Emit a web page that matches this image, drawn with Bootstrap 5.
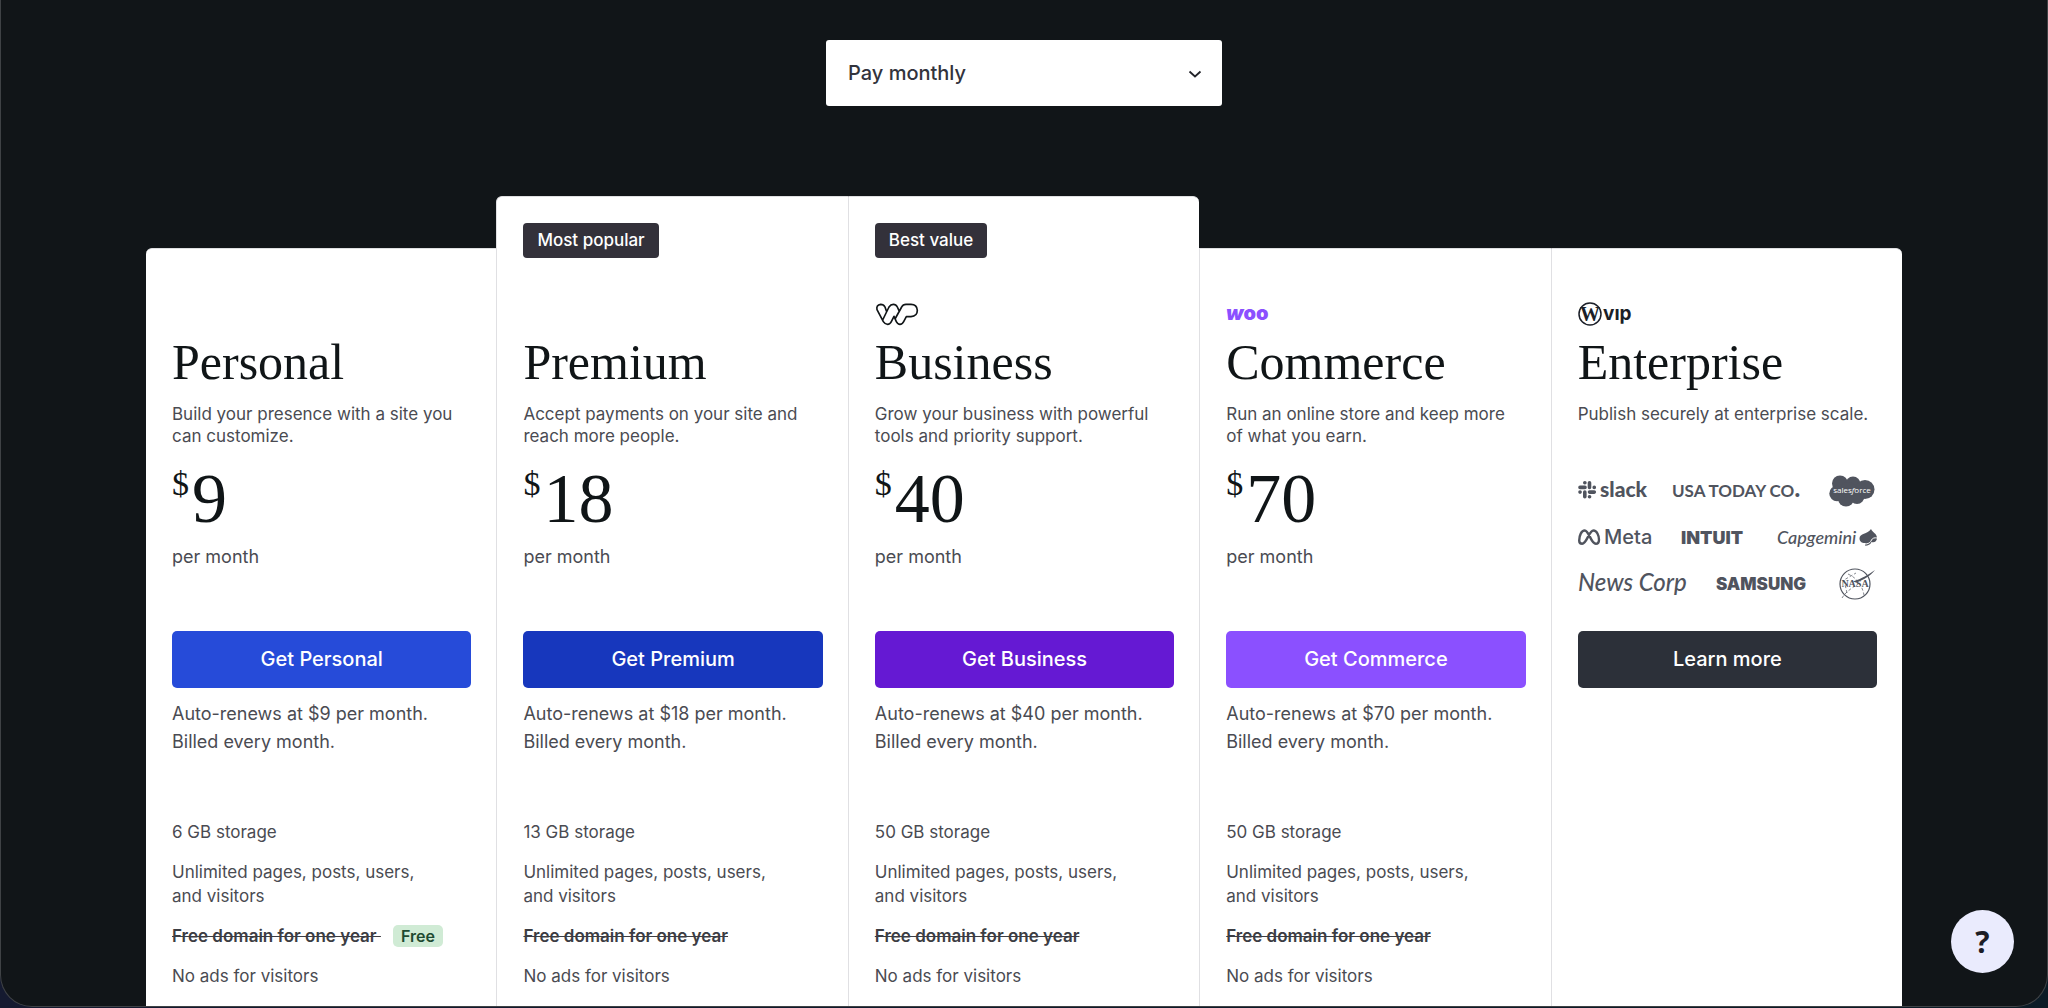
<!DOCTYPE html>
<html lang="en">
<head>
<meta charset="utf-8">
<meta name="viewport" content="width=device-width, initial-scale=1">
<title>Plans</title>
<link href="https://cdn.jsdelivr.net/npm/bootstrap@5.3.0/dist/css/bootstrap.min.css" rel="stylesheet">
<style>
  html, body { height: 100%; }
  body { background: linear-gradient(90deg, #151a30, #0b1b26); font-family: Inter, "Liberation Sans", sans-serif; color: #4a4b52; }
  .frame { height: calc(100vh - 1px); padding-top: 40px; background: #111518; border: 1px solid #3f4245; border-top: 0; border-radius: 0 0 32px 32px; overflow: hidden; }
  .term { width: 396px; height: 66px; padding: 0 60px 0 22px; border: 0; border-radius: 3px; background-color: #fff; color: #32333c; font-size: 20px; font-weight: 500; appearance: none; }
  .term-box svg { right: 20px; top: 28px; pointer-events: none; }
  .plans { width: 86%; max-width: 1756px; margin-top: 90px; }
  .plan { flex: 1 1 0; min-width: 0; background: #fff; margin-top: 52px; padding: 53px 25px 120px 26px; border-top: 1px solid #dfdfe1; border-left: 1px solid #e0e0e3; }
  .plan.featured { margin-top: 0; padding-top: 26px; }
  .plan.first { border-left: 0; }
  .plan.first, .plan.lead-in { border-top-left-radius: 6px; }
  .plan.last, .plan.lead-out { border-top-right-radius: 6px; }
  .tag { display: block; width: max-content; height: 35px; line-height: 35px; padding: 0 14px; border-radius: 4px; background: #33313a; color: #fff; font-size: 17px; font-weight: 500; margin-bottom: 44px; }
  .brand { height: 24px; display: flex; align-items: center; }
  .brand svg, .logos svg { display: block; overflow: visible; }
  .plan h2 { font: 400 50px/60px "Liberation Serif", serif; color: #101517; margin: 6px 0 11px; }
  .blurb { font-size: 17px; line-height: 22px; height: 60px; margin: 0; }
  .price { height: 68px; font-family: "Liberation Serif", serif; color: #101517; display: flex; align-items: flex-start; }
  .price sup { font-size: 34px; line-height: 42px; top: 0; margin-right: 3px; }
  .price b { font-weight: 400; font-size: 70px; line-height: 72px; }
  .period { font-size: 18px; line-height: 26px; margin: 13px 0 0; height: 87px; }
  .buy { display: flex; align-items: center; justify-content: center; width: 100%; height: 57px; border: 0; border-radius: 5px; color: #fff; font-size: 20px; font-weight: 500; padding-bottom: 8px; }
  .buy:hover { color: #fff; }
  .c-personal { background: #264bd9; } .c-premium { background: #1737bd; } .c-business { background: #6519d3; }
  .c-commerce { background: #8b50ff; } .c-enterprise { background: #2c3039; }
  .renew { font-size: 18px; line-height: 28px; margin: 12px 0 64px; }
  .perks { font-size: 17px; line-height: 24px; max-width: 275px; }
  .perks li { margin-bottom: 16px; }
  .perks s { font-weight: 600; color: #3c3d43; }
  .perk-free { gap: 12px; }
  .pill { font-size: 16px; line-height: 22px; font-weight: 600; color: #1f4a31; background: #d0ebd5; border-radius: 5px; padding: 0 8px; }
  .logos { height: 168px; padding-top: 9px; }
  .help { right: 34px; bottom: 35px; width: 63px; height: 63px; border: 0; border-radius: 50%; background: #eaebfd; color: #1c1d26; font: 700 30px/60px "Open Sans", sans-serif; padding: 0; }
</style>
<script src="https://cdn.jsdelivr.net/npm/bootstrap@5.3.0/dist/js/bootstrap.bundle.min.js"></script>
</head>
<body>
<main class="frame d-flex flex-column align-items-center">
  <div class="term-box position-relative">
    <select class="term" aria-label="Billing term"><option>Pay monthly</option></select>
    <svg class="position-absolute" width="14" height="12" viewBox="0 0 14 12" fill="none" stroke="#222329" stroke-width="1.800"><path d="M1.500 3.500 7 8.500l5.500-5"/></svg>
  </div>
  <div class="plans d-flex align-items-stretch">
    <section class="plan first">
      <div class="brand"></div>
      <h2>Personal</h2>
      <p class="blurb">Build your presence with a site you can customize.</p>
      <div class="price"><sup>$</sup><b>9</b></div>
      <p class="period">per month</p>
      <button type="button" class="btn buy c-personal">Get Personal</button>
      <p class="renew">Auto-renews at $9 per month.<br>Billed every month.</p>
      <ul class="perks list-unstyled"><li>6 GB storage</li><li>Unlimited pages, posts, users, and visitors</li><li class="perk-free d-flex align-items-center"><s>Free domain for one year&nbsp;</s><span class="pill">Free</span></li><li>No ads for visitors</li></ul>
    </section>
    <section class="plan featured lead-in">
      <span class="tag">Most popular</span>
      <div class="brand"></div>
      <h2>Premium</h2>
      <p class="blurb">Accept payments on your site and reach more people.</p>
      <div class="price"><sup>$</sup><b>18</b></div>
      <p class="period">per month</p>
      <button type="button" class="btn buy c-premium">Get Premium</button>
      <p class="renew">Auto-renews at $18 per month.<br>Billed every month.</p>
      <ul class="perks list-unstyled"><li>13 GB storage</li><li>Unlimited pages, posts, users, and visitors</li><li><s>Free domain for one year</s></li><li>No ads for visitors</li></ul>
    </section>
    <section class="plan featured lead-out">
      <span class="tag">Best value</span>
      <div class="brand">
        <svg width="45" height="24" viewBox="45 33 135 72" fill="none" stroke="#101517" stroke-width="5" stroke-linejoin="round"><path d="M68 87 87 48Q92 40 100 40 108 40 112 48L118 61M80 62 75 48Q71 40 62 40 48 42 51 56L70 92Q75 100 83 100 90 100 94 92L102 76 109 92Q113 100 120 100 127 100 131 92L139 77H153Q172 76 172 58 171 40 153 40H138Q129 40 125 48L105 84"/></svg>
      </div>
      <h2>Business</h2>
      <p class="blurb">Grow your business with powerful tools and priority support.</p>
      <div class="price"><sup>$</sup><b>40</b></div>
      <p class="period">per month</p>
      <button type="button" class="btn buy c-business">Get Business</button>
      <p class="renew">Auto-renews at $40 per month.<br>Billed every month.</p>
      <ul class="perks list-unstyled"><li>50 GB storage</li><li>Unlimited pages, posts, users, and visitors</li><li><s>Free domain for one year</s></li><li>No ads for visitors</li></ul>
    </section>
    <section class="plan">
      <div class="brand">
        <svg width="46" height="20" viewBox="0 0 46 20"><text x="0" y="16" font-family="Inter, sans-serif" font-weight="900" font-size="20" fill="#8b50ff"><tspan font-style="italic">w</tspan>oo</text></svg>
      </div>
      <h2>Commerce</h2>
      <p class="blurb">Run an online store and keep more of what you earn.</p>
      <div class="price"><sup>$</sup><b>70</b></div>
      <p class="period">per month</p>
      <button type="button" class="btn buy c-commerce">Get Commerce</button>
      <p class="renew">Auto-renews at $70 per month.<br>Billed every month.</p>
      <ul class="perks list-unstyled"><li>50 GB storage</li><li>Unlimited pages, posts, users, and visitors</li><li><s>Free domain for one year</s></li><li>No ads for visitors</li></ul>
    </section>
    <section class="plan last">
      <div class="brand">
        <svg width="60" height="24" viewBox="0 0 60 24" fill="#1b1f28"><circle cx="12" cy="12" r="11" fill="none" stroke="#1b1f28" stroke-width="1.500"/><text x="12" y="19" text-anchor="middle" font-family="Liberation Serif, serif" font-weight="700" font-size="20">W</text><text x="25" y="18" font-family="Inter, sans-serif" font-weight="700" font-size="19">vıp</text></svg>
      </div>
      <h2>Enterprise</h2>
      <p class="blurb">Publish securely at enterprise scale.</p>
      <div class="logos">
        <svg width="299" height="126" viewBox="0 0 299 126" fill="#50545e" font-family="Lato, sans-serif">
          <!-- Slack -->
          <g stroke="#50545e" stroke-width="3.600" stroke-linecap="round" fill="none">
            <path d="M6.800 10.700h.1M2 15.400h5M11.500 10.700v4.700M16.200 15.400h.1M2 20.100h.1M6.800 20.100v4.700M11.500 20.100h4.800M11.500 24.800h.1"/>
          </g>
          <text x="22" y="25" font-weight="900" font-size="21">slack</text>
          <text x="94" y="25" font-weight="700" font-size="17">USA TODAY CO<tspan font-size="26">.</tspan></text>
          <!-- Salesforce -->
          <g><circle cx="262" cy="11.500" r="8"/><circle cx="275" cy="12" r="7.500"/><circle cx="287" cy="17.500" r="9.500"/><circle cx="259" cy="21.500" r="7.700"/><circle cx="268" cy="26.500" r="8"/><circle cx="279" cy="24.500" r="7.500"/><circle cx="270" cy="18" r="8"/></g>
          <text x="274" y="21" fill="#fff" text-anchor="middle" font-size="8" font-family="Open Sans, sans-serif">sales<tspan font-style="italic">f</tspan>orce</text>
          <!-- Meta -->
          <path d="M1.200 68.500C1.200 63.500 3.500 58.500 6.700 58.500c4.300 0 6.300 13.300 11.100 13.300 2.400 0 3.200-1.600 3.200-4C21 63.500 18.700 58.500 15.500 58.500 11 58.500 8.700 71.800 4.200 71.800c-2.200 0-3-1.300-3-3.300z" fill="none" stroke="#50545e" stroke-width="2.400"/>
          <text x="26" y="72" font-size="20" font-weight="500" font-family="Inter, sans-serif">Meta</text>
          <text x="103" y="72" font-size="18" font-weight="900" font-family="Inter, sans-serif">INTUIT</text>
          <!-- Capgemini -->
          <text x="199" y="72" font-size="18" font-style="italic" font-weight="500">Capgemini</text>
          <path d="M293 57c1.500 3.500 6 4.500 6 9 0 3.500-3 5-5.500 4-1 2.500-3.500 3.700-6.500 3.700.5-.8.800-1.500.8-2.700-3 .5-6.300-1-6.300-4.500 0-5 8-4.500 11.500-9.500z"/>
          <path d="M288 72c3.500-.5 4.500-2 5.500-4s3-2.500 5.500-2" fill="none" stroke="#fff" stroke-width="1"/>
          <text x="0" y="119" font-size="24" font-style="italic" font-weight="500">News Corp</text>
          <text x="138" y="118" font-size="17" font-weight="900" font-family="Inter, sans-serif">SAMSUNG</text>
          <!-- NASA -->
          <circle cx="277" cy="112" r="15" fill="none" stroke="#50545e" stroke-width="1.200"/>
          <g fill="none" stroke="#50545e" stroke-width=".7"><path d="M270 102c9 4 14 11 16 21M264 126c3-5 8-9 16-14M269 121l-3-13 12-7" stroke-dasharray="3 2"/></g>
          <path d="M297 98c-5 6-11 10-19 12.500l-3-1c9-3 15-6.500 22-11.500z"/>
          <text x="277" y="115" text-anchor="middle" font-size="10" font-weight="700" font-family="Liberation Serif, serif">NASA</text>
        </svg>
      </div>
      <button type="button" class="btn buy c-enterprise">Learn more</button>
    </section>
  </div>
</main>
<button type="button" class="help position-fixed" aria-label="Help">?</button>
</body>
</html>
